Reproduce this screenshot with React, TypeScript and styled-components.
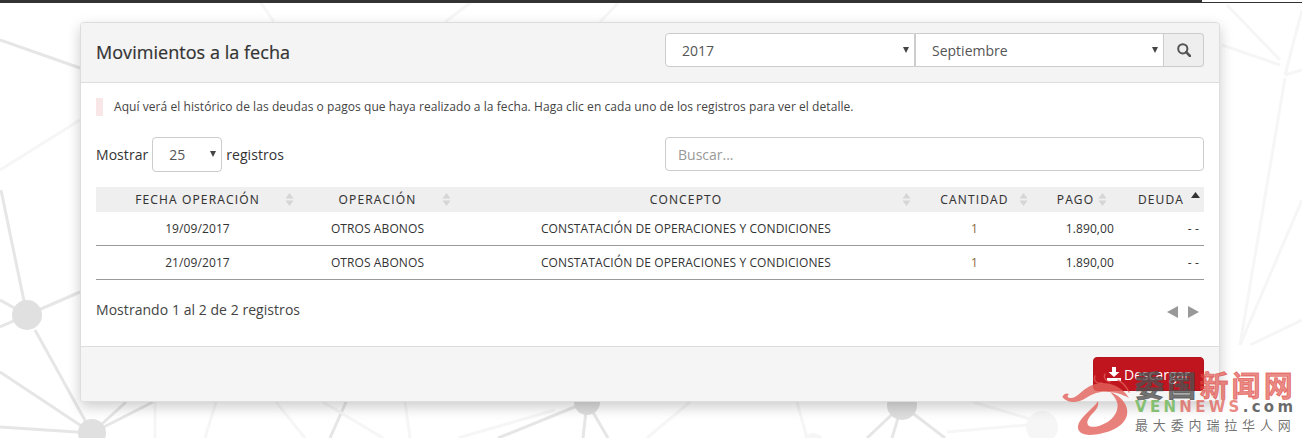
import React from "react";
import styled, { createGlobalStyle } from "styled-components";

const Global = createGlobalStyle`
  html, body { margin: 0; padding: 0; background: #fff; }
  body { font-family: "Open Sans", "Noto Sans", sans-serif; color: #333; }
`;

const Page = styled.div`
  position: relative;
  width: 1302px;
  height: 438px;
  overflow: hidden;
  background: #fff;
`;
const Backdrop = styled.svg`
  position: absolute;
  inset: 0;
  filter: blur(0.5px);
`;
const TopBar = styled.div`
  position: relative;
  height: 3px;
  display: flex;
  align-items: flex-end;
`;
const TopBarDark = styled.div`
  width: 1202px;
  height: 3px;
  background: #333;
`;
const TopBarThin = styled.div`
  flex: 1;
  height: 1px;
  background: #333;
`;
const Card = styled.section`
  position: relative;
  width: 1140px;
  height: 380px;
  margin: 19px 0 0 80px;
  box-sizing: border-box;
  border: 1px solid #ddd;
  border-radius: 4px;
  background: #fff;
  box-shadow: 0 5px 14px rgba(0, 0, 0, 0.2);
  display: flex;
  flex-direction: column;
`;
const CardHeader = styled.header`
  height: 60px;
  box-sizing: border-box;
  padding: 10px 15px 0;
  display: flex;
  justify-content: space-between;
  align-items: flex-start;
  background: #f4f4f4;
  border-bottom: 1px solid #ddd;
  border-radius: 4px 4px 0 0;
`;
const Title = styled.h2`
  margin: 7px 0 0;
  font-size: 18px;
  line-height: 24px;
  font-weight: 500;
  letter-spacing: 0.04px;
  -webkit-text-stroke: 0.2px #333;
  color: #333;
`;
const Filters = styled.div`
  display: flex;
  width: 539px;
  height: 34px;
`;
const SelectWrap = styled.div<{ $w: number; $radius?: string; $size?: number }>`
  position: relative;
  width: ${(p) => p.$w}px;
  height: ${(p) => p.$size ?? 34}px;
  flex: none;
  &::after {
    content: "";
    position: absolute;
    right: 6px;
    top: 14px;
    border-left: 3.5px solid transparent;
    border-right: 3.5px solid transparent;
    border-top: 6px solid #444;
  }
  select {
    width: 100%;
    height: 100%;
    box-sizing: border-box;
    appearance: none;
    border: 1px solid #ccc;
    border-radius: ${(p) => p.$radius ?? "4px"};
    background: #fff;
    padding: 0 16px;
    font: 14px "Open Sans", sans-serif;
    color: #555;
    outline: none;
  }
`;
const SearchButton = styled.button`
  width: 40px;
  height: 34px;
  padding: 0;
  display: flex;
  align-items: center;
  justify-content: center;
  border: 1px solid #ccc;
  border-left: 0;
  border-radius: 0 4px 4px 0;
  background: #eee;
  color: #555;
`;
const CardBody = styled.div`
  flex: 1;
  padding: 15px 15px 0;
`;
const Hint = styled.p`
  margin: 0;
  height: 18px;
  box-sizing: border-box;
  padding-left: 11px;
  border-left: 7px solid #f9e6e6;
  font-size: 12px;
  line-height: 18px;
  color: #444;
  letter-spacing: 0.06px;
`;
const Controls = styled.div`
  display: flex;
  justify-content: space-between;
  align-items: flex-start;
  margin-top: 21px;
`;
const Length = styled.div`
  display: flex;
  align-items: center;
  gap: 4px;
  height: 35px;
  font-size: 14px;
  letter-spacing: 0.05px;
  color: #333;
`;
const SearchInput = styled.input`
  width: 539px;
  height: 34px;
  box-sizing: border-box;
  border: 1px solid #ccc;
  border-radius: 4px;
  padding: 0 12px;
  font: 14px "Open Sans", sans-serif;
  outline: none;
  &::placeholder { color: #999; opacity: 1; }
`;
const Table = styled.table`
  width: 1108px;
  margin-top: 15px;
  border-collapse: collapse;
  table-layout: fixed;
`;
const Th = styled.th<{ $w: number }>`
  position: relative;
  width: ${(p) => p.$w}px;
  height: 25px;
  padding: 0;
  background: #efefef;
  font-size: 12px;
  font-weight: 400;
  letter-spacing: 1.15px;
  color: #333;
  text-align: center;
  -webkit-text-stroke: 0.1px #333;
`;
const Sort = styled.svg<{ $right: number }>`
  position: absolute;
  right: ${(p) => p.$right}px;
  top: 5px;
`;
const Td = styled.td<{ $align?: string; $pr?: number; $color?: string }>`
  height: 33px;
  padding: 0 ${(p) => p.$pr ?? 0}px 0 0;
  font-size: 12px;
  letter-spacing: 0.1px;
  color: ${(p) => p.$color ?? "#333"};
  text-align: ${(p) => p.$align ?? "center"};
  border-bottom: 1px solid #999;
`;
const Info = styled.div`
  display: flex;
  justify-content: space-between;
  align-items: center;
  margin-top: 19px;
  height: 20px;
  font-size: 14px;
  letter-spacing: 0.05px;
  color: #444;
`;
const Pager = styled.svg`
  margin: 5px 5px 0 0;
  filter: blur(0.4px);
`;
const CardFooter = styled.footer`
  height: 55px;
  box-sizing: border-box;
  padding: 10px 15px 0;
  display: flex;
  justify-content: flex-end;
  background: #f5f5f5;
  border-top: 1px solid #ddd;
  border-radius: 0 0 4px 4px;
`;
const Download = styled.button`
  width: 111px;
  height: 34px;
  padding: 0;
  display: flex;
  align-items: center;
  justify-content: center;
  gap: 3px;
  border: 1px solid #b4141f;
  border-radius: 4px;
  background: #c0141f;
  color: #fff;
  font: 14px "Open Sans", sans-serif;
`;
const Watermark = styled.div`
  position: absolute;
  left: 1062px;
  top: 368px;
  width: 236px;
  height: 66px;
  font-family: "Noto Sans CJK SC", sans-serif;
`;
const Dragon = styled.svg`
  position: absolute;
  left: 0;
  top: 0;
`;
const Marks = styled.div`
  position: absolute;
  left: 73px;
  top: 0;
  width: 163px;
  display: flex;
  flex-direction: column;
`;
const MarkTitle = styled.div`
  font-size: 29px;
  line-height: 33px;
  font-weight: 700;
  letter-spacing: 3.2px;
  white-space: nowrap;
  -webkit-text-stroke: 0.8px currentColor;
`;
const MarkGrey = styled.span`
  color: rgba(80, 80, 80, 0.8);
`;
const MarkRed = styled.span`
  color: rgba(222, 70, 62, 0.65);
`;
const MarkDomain = styled.div`
  font-family: "DejaVu Sans", sans-serif;
  font-size: 15px;
  line-height: 13px;
  font-weight: 700;
  letter-spacing: 3.3px;
  white-space: nowrap;
  color: rgba(80, 80, 80, 0.85);
`;
const MarkGreen = styled.span`
  color: #85bf72;
`;
const MarkSub = styled.div`
  margin-top: 3px;
  font-size: 13px;
  line-height: 16px;
  letter-spacing: 4.85px;
  white-space: nowrap;
  color: rgba(90, 90, 90, 0.85);
`;

const strongLines = [
  [24, 301, 1, 190], [0, 300, 27, 315], [0, 327, 27, 315], [27, 315, 80, 292],
  [35, 330, 92, 433], [0, 372, 92, 433], [0, 427, 92, 433], [92, 433, 126, 402], [92, 433, 153, 402],
  [346, 402, 330, 438], [587, 402, 498, 438], [587, 402, 583, 438], [587, 402, 608, 438],
  [0, 40, 80, 68], [902, 405, 867, 438], [902, 405, 892, 438], [902, 405, 945, 438],
];
const faintLines = [
  [261, 3, 274, 22], [470, 3, 445, 22], [618, 3, 600, 22], [0, 170, 80, 120], [155, 402, 155, 438], [216, 402, 205, 438],
  [276, 402, 305, 438], [323, 402, 383, 438], [405, 402, 410, 438], [555, 410, 458, 438],
  [690, 402, 647, 438], [797, 402, 807, 438], [973, 402, 1033, 420], [947, 432, 1027, 425],
  [1227, 5, 1280, 60], [1222, 45, 1280, 65], [1285, 78, 1240, 345], [1302, 200, 1240, 345],
  [1302, 320, 1250, 345], [1302, 10, 1285, 75], [1302, 70, 1285, 75],
];

const SortIcon = ({ right, active }: { right: number; active?: boolean }) => (
  <Sort $right={right} width="9" height="15" viewBox="0 0 9 15">
    {active ? (
      <path d="M4.5 0 L9 6 H0 Z" fill="#333" />
    ) : (
      <>
        <path d="M4.5 1 L8.5 6.5 H0.5 Z" fill="#d6d6d6" />
        <path d="M4.5 14 L8.5 8.5 H0.5 Z" fill="#d6d6d6" />
      </>
    )}
  </Sort>
);

const rows = ["19/09/2017", "21/09/2017"];

export default function App() {
  return (
    <Page>
      <Global />
      <Backdrop width="1302" height="438" viewBox="0 0 1302 438">
        <g stroke="#e6e6e6" strokeWidth="3">
          {strongLines.map(([a, b, c, d], i) => <line key={i} x1={a} y1={b} x2={c} y2={d} />)}
        </g>
        <g stroke="#f6f6f6" strokeWidth="3">
          {faintLines.map(([a, b, c, d], i) => <line key={i} x1={a} y1={b} x2={c} y2={d} />)}
        </g>
        <circle cx="27" cy="315" r="15" fill="#e0e0e0" />
        <circle cx="92" cy="433" r="14" fill="#e0e0e0" />
        <circle cx="587" cy="402" r="13" fill="#dedede" />
        <circle cx="902" cy="405" r="15" fill="#dedede" />
        <circle cx="1042" cy="427" r="16" fill="#f6f6f6" />
        <circle cx="813" cy="445" r="12" fill="#f6f6f6" />
      </Backdrop>
      <TopBar>
        <TopBarDark />
        <TopBarThin />
      </TopBar>
      <Card>
        <CardHeader>
          <Title>Movimientos a la fecha</Title>
          <Filters>
            <SelectWrap $w={250} $radius="4px 0 0 4px">
              <select defaultValue="2017"><option>2017</option></select>
            </SelectWrap>
            <SelectWrap $w={249} $radius="0">
              <select defaultValue="Septiembre"><option>Septiembre</option></select>
            </SelectWrap>
            <SearchButton aria-label="Buscar">
              <svg width="14" height="14" viewBox="0 0 14 14" fill="none" stroke="#555" strokeWidth="2">
                <circle cx="5.8" cy="5.8" r="4.6" />
                <path d="M9.2 9.2 L13 13" strokeWidth="2.6" strokeLinecap="round" />
              </svg>
            </SearchButton>
          </Filters>
        </CardHeader>
        <CardBody>
          <Hint>Aquí verá el histórico de las deudas o pagos que haya realizado a la fecha. Haga clic en cada uno de los registros para ver el detalle.</Hint>
          <Controls>
            <Length>
              Mostrar
              <SelectWrap $w={70} $size={35}>
                <select defaultValue="25"><option>25</option></select>
              </SelectWrap>
              registros
            </Length>
            <SearchInput placeholder="Buscar..." />
          </Controls>
          <Table>
            <thead>
              <tr>
                <Th $w={203}>FECHA OPERACIÓN<SortIcon right={5} /></Th>
                <Th $w={157}>OPERACIÓN<SortIcon right={5} /></Th>
                <Th $w={460}>CONCEPTO<SortIcon right={5} /></Th>
                <Th $w={117}>CANTIDAD<SortIcon right={5} /></Th>
                <Th $w={85}>PAGO<SortIcon right={11} /></Th>
                <Th $w={86}>DEUDA<SortIcon right={4} active /></Th>
              </tr>
            </thead>
            <tbody>
              {rows.map((d) => (
                <tr key={d}>
                  <Td>{d}</Td>
                  <Td>OTROS ABONOS</Td>
                  <Td>CONSTATACIÓN DE OPERACIONES Y CONDICIONES</Td>
                  <Td $color="#8a6a3a">1</Td>
                  <Td $align="right" $pr={4}>1.890,00</Td>
                  <Td $align="right" $pr={5}>- -</Td>
                </tr>
              ))}
            </tbody>
          </Table>
          <Info>
            Mostrando 1 al 2 de 2 registros
            <Pager width="33" height="14" viewBox="0 0 33 14">
              <path d="M12 1 V13 L1 7 Z" fill="#999" />
              <path d="M22 1 V13 L33 7 Z" fill="#999" />
            </Pager>
          </Info>
        </CardBody>
        <CardFooter>
          <Download>
            <svg width="14" height="14" viewBox="0 0 14 14" fill="#fff">
              <path d="M5 0 H9 V5 H12.5 L7 10 L1.5 5 H5 Z" />
              <path d="M0 11 H14 V14 H0 Z" />
            </svg>
            Descargar
          </Download>
        </CardFooter>
      </Card>
      <Watermark>
        <Dragon width="74" height="70" viewBox="0 0 74 70">
          <path
            d="M0.3 29 C2 25 5 25 7 26 C5 28 5 30 9 30 C15 30 20 22 28 18 C36 14 46 14 54 18 C60 21 64 25 67 30 C60 26 52 24 46 24 C38 23 30 26 24 30 C16 35 6 36 0.3 29 Z"
            fill="#e2625a"
            fillOpacity="0.8"
          />
          <path
            d="M48 24 C60 28 67 38 65 47 C62 60 44 66 28 67 C20 67 15 63 16 58 C17 52 24 46 30 40 C33 37 35 35 36 33 C37 37 35 41 32 44 C27 49 24 53 26 57 C29 61 40 58 47 53 C54 48 57 40 55 34 C53 29 51 27 48 24 Z"
            fill="#e2625a"
            fillOpacity="0.8"
          />
          <path d="M33 8 C31 13 35 16 40 15 M43 6 C41 10 44 13 48 14 M56 12 C60 14 64 18 67 24" fill="none" stroke="#e2625a" strokeOpacity="0.75" strokeWidth="1.4" strokeLinecap="round" />
        </Dragon>
        <Marks>
          <MarkTitle><MarkGrey>委国</MarkGrey><MarkRed>新闻网</MarkRed></MarkTitle>
          <MarkDomain><MarkGreen>VEN</MarkGreen><MarkRed>NEWS</MarkRed>.com</MarkDomain>
          <MarkSub>最大委内瑞拉华人网</MarkSub>
        </Marks>
      </Watermark>
    </Page>
  );
}
